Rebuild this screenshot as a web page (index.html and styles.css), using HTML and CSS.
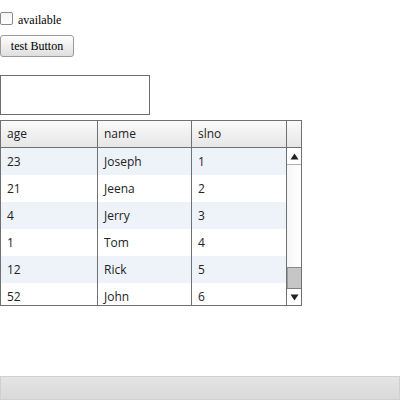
FILE: index.html
```html
<!DOCTYPE html>
<html>
<head>
<meta charset="utf-8">
<link rel="stylesheet" href="styles.css">
</head>
<body>
<div class="page">
  <label class="check-row"><span class="checkbox"></span><span class="check-label">available</span></label>
  <button class="btn">test Button</button>
  <div class="textbox"></div>
  <div class="grid">
    <div class="thead">
      <div class="th">age</div>
      <div class="th">name</div>
      <div class="th">slno</div>
      <div class="th th-last"></div>
    </div>
    <div class="tbody">
      <div class="rows">
        <div class="tr alt"><div class="td">23</div><div class="td">Joseph</div><div class="td">1</div></div>
        <div class="tr"><div class="td">21</div><div class="td">Jeena</div><div class="td">2</div></div>
        <div class="tr alt"><div class="td">4</div><div class="td">Jerry</div><div class="td">3</div></div>
        <div class="tr"><div class="td">1</div><div class="td">Tom</div><div class="td">4</div></div>
        <div class="tr alt"><div class="td">12</div><div class="td">Rick</div><div class="td">5</div></div>
        <div class="tr"><div class="td">52</div><div class="td">John</div><div class="td">6</div></div>
      </div>
      <div class="scrollbar">
        <div class="sb-btn sb-up"><svg width="9" height="7" viewBox="0 0 9 7"><path d="M0.5 6.5 L4.5 0.5 L8.5 6.5 Z" fill="#222"/></svg></div>
        <div class="sb-track"><div class="sb-thumb"></div></div>
        <div class="sb-btn sb-down"><svg width="9" height="7" viewBox="0 0 9 7"><path d="M0.5 0.5 L4.5 6.5 L8.5 0.5 Z" fill="#222"/></svg></div>
      </div>
    </div>
  </div>
  <div class="spacer"></div>
  <div class="footer-bar"></div>
</div>
</body>
</html>
```
FILE: styles.css
```css
html, body {
  margin: 0;
  padding: 0;
  background: #fff;
}
.page {
  width: 400px;
  height: 400px;
  display: flex;
  flex-direction: column;
  align-items: flex-start;
  font-family: "Liberation Serif", serif;
  font-size: 12px;
  color: #000;
}
.check-row {
  display: flex;
  align-items: flex-start;
  margin-top: 12px;
  height: 15px;
}
.checkbox {
  width: 13px;
  height: 13px;
  box-sizing: border-box;
  border: 1px solid #8a8a8a;
  border-radius: 2px;
  background: linear-gradient(#f4f4f4, #ffffff);
}
.check-label {
  margin-left: 5px;
  margin-top: 2px;
  line-height: 13px;
}
.btn {
  margin-top: 8px;
  width: 74px;
  height: 22px;
  box-sizing: border-box;
  padding: 0;
  border: 1px solid #9a9a9a;
  border-radius: 3px;
  background: linear-gradient(#ffffff, #dedede);
  font-family: "Liberation Serif", serif;
  font-size: 12px;
  color: #000;
}
.textbox {
  margin-top: 18px;
  width: 150px;
  height: 40px;
  box-sizing: border-box;
  border: 1px solid #6e6e6e;
  background: #fff;
}
.grid {
  margin-top: 5px;
  width: 302px;
  height: 186px;
  box-sizing: border-box;
  border: 1px solid #707070;
  overflow: hidden;
  font-family: "Open Sans", sans-serif;
  font-size: 12px;
  color: #222;
  display: flex;
  flex-direction: column;
}
.thead {
  display: grid;
  grid-template-columns: 97px 94px 95px 14px;
  height: 27px;
  box-sizing: border-box;
  border-bottom: 1px solid #707070;
  background: linear-gradient(#fafafa, #e6e6e6);
  flex-shrink: 0;
}
.th {
  box-sizing: border-box;
  border-right: 1px solid #707070;
  padding-left: 6px;
  line-height: 26px;
}
.th-last {
  border-right: none;
  padding: 0;
}
.tbody {
  display: flex;
  flex: 1;
  min-height: 0;
}
.rows {
  width: 286px;
  display: flex;
  flex-direction: column;
}
.tr {
  display: grid;
  grid-template-columns: 97px 94px 95px;
  height: 27px;
  flex-shrink: 0;
  background: #fff;
}
.tr.alt {
  background: #eef3fa;
}
.td {
  box-sizing: border-box;
  border-right: 1px solid #707070;
  padding-left: 6px;
  line-height: 27px;
}
.scrollbar {
  width: 14px;
  display: flex;
  flex-direction: column;
  background: #fff;
}
.sb-btn {
  height: 16px;
  flex-shrink: 0;
  display: flex;
  align-items: center;
  justify-content: center;
  background: #fff;
}
.sb-up {
  border-bottom: 1px solid #b0b0b0;
}
.sb-down {
  border-top: 1px solid #808080;
}
.sb-track {
  flex: 1;
  display: flex;
  flex-direction: column;
  justify-content: flex-end;
  background: linear-gradient(90deg, #f6f6f6, #ffffff);
}
.sb-thumb {
  height: 21px;
  box-sizing: border-box;
  border-top: 1px solid #8a8a8a;
  border-left: 1px solid #9a9a9a;
  background: #c6c6c6;
}
.spacer {
  flex: 1;
}
.footer-bar {
  width: 400px;
  height: 24px;
  box-sizing: border-box;
  border: 1px solid #d0d0d0;
  background: linear-gradient(#e4e4e4, #d9d9d9);
}
```
